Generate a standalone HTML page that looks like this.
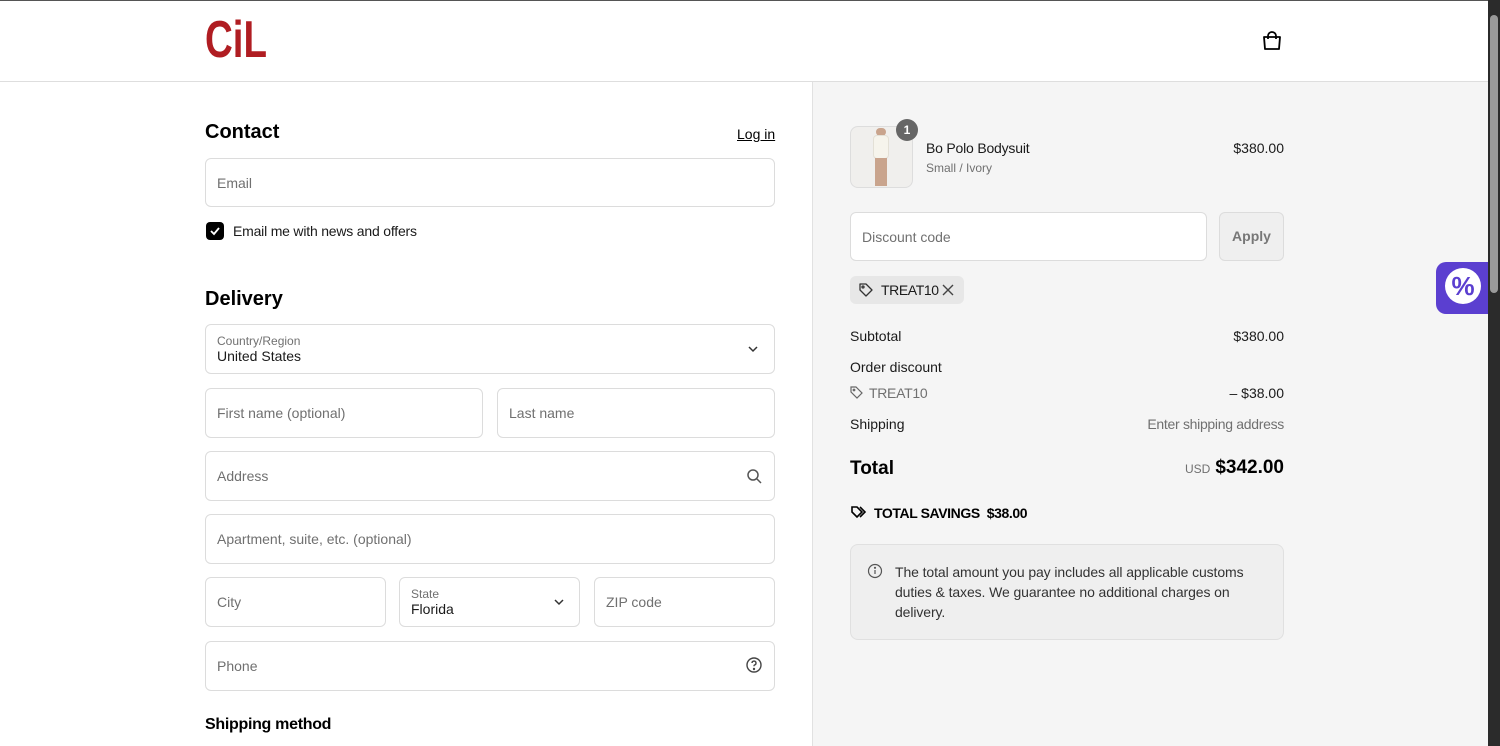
<!DOCTYPE html>
<html><head><meta charset="utf-8"><style>
*{box-sizing:border-box;margin:0;padding:0}
body{width:1500px;height:746px;overflow:hidden;position:relative;font-family:"Liberation Sans",sans-serif;color:#000;background:#fff}
.a{position:absolute}
.inp{position:absolute;border:1px solid #dcdcdc;border-radius:6px;background:#fff;font-size:14px;color:#707070;padding-left:11px;display:flex;align-items:center}
h2{position:absolute;font-size:20px;font-weight:bold}
.r{font-size:14px;color:#1a1a1a}
.rt{position:absolute;right:216px;text-align:right;white-space:nowrap}
</style></head><body>
<div class="a" style="left:0;top:0;width:1488px;height:1px;background:#555"></div>
<div class="a" style="left:205px;top:12px;font-size:52px;font-weight:bold;color:#b01d22;line-height:56px;transform:scaleX(0.74);transform-origin:left top">CiL</div>
<svg class="a" style="left:1261px;top:30px" width="22" height="22" viewBox="0 0 22 22" fill="none" stroke="#000" stroke-width="1.8"><path d="M3 7h16l-1 12H4z" stroke-linejoin="round"/><path d="M7 9V6a4 4 0 0 1 8 0v3"/></svg>
<div class="a" style="left:0;top:81px;width:1488px;height:1px;background:#dedede"></div>
<div class="a" style="left:812px;top:82px;width:676px;height:664px;background:#f5f5f5;border-left:1px solid #e1e1e1"></div>

<h2 style="left:205px;top:121px">Contact</h2>
<div class="a" style="left:737px;top:126px;font-size:14px;text-decoration:underline">Log in</div>
<div class="inp" style="left:205px;top:158px;width:570px;height:49px">Email</div>
<div class="a" style="left:206px;top:222px;width:18px;height:18px;background:#000;border-radius:4px"></div>
<svg class="a" style="left:206px;top:222px" width="18" height="18"><path d="M5 9l3 3 5-6" stroke="#fff" stroke-width="1.8" fill="none"/></svg>
<div class="a r" style="left:233px;top:223px;letter-spacing:-0.2px">Email me with news and offers</div>

<h2 style="left:205px;top:288px">Delivery</h2>
<div class="inp" style="left:205px;top:324px;width:570px;height:50px;display:block;padding-top:9px"><div style="font-size:12px;color:#707070">Country/Region</div><div style="color:#1a1a1a;font-size:14px">United States</div></div>
<svg class="a" style="left:747px;top:343px" width="12" height="12"><path d="M2 4l4 4 4-4" stroke="#333" stroke-width="1.5" fill="none"/></svg>
<div class="inp" style="left:205px;top:388px;width:278px;height:50px">First name (optional)</div>
<div class="inp" style="left:497px;top:388px;width:278px;height:50px">Last name</div>
<div class="inp" style="left:205px;top:451px;width:570px;height:50px">Address</div>
<svg class="a" style="left:745px;top:467px" width="18" height="18" fill="none" stroke="#555" stroke-width="1.5"><circle cx="8" cy="8" r="5"/><path d="M12 12l4 4"/></svg>
<div class="inp" style="left:205px;top:514px;width:570px;height:50px">Apartment, suite, etc. (optional)</div>
<div class="inp" style="left:205px;top:577px;width:181px;height:50px">City</div>
<div class="inp" style="left:399px;top:577px;width:181px;height:50px;display:block;padding-top:9px"><div style="font-size:12px">State</div><div style="color:#1a1a1a">Florida</div></div>
<svg class="a" style="left:553px;top:596px" width="12" height="12"><path d="M2 4l4 4 4-4" stroke="#333" stroke-width="1.5" fill="none"/></svg>
<div class="inp" style="left:594px;top:577px;width:181px;height:50px">ZIP code</div>
<div class="inp" style="left:205px;top:641px;width:570px;height:50px">Phone</div>
<svg class="a" style="left:745px;top:656px" width="18" height="18" fill="none" stroke="#444" stroke-width="1.4"><circle cx="9" cy="9" r="7"/><path d="M7 7a2 2 0 1 1 2.5 2c-.5.2-.5.7-.5 1.3"/><circle cx="9" cy="13" r=".5" fill="#444"/></svg>
<div class="a" style="left:205px;top:716px;font-size:16px;font-weight:bold;letter-spacing:-0.3px">Shipping method</div>

<div class="a" style="left:850px;top:126px;width:63px;height:62px;border:1px solid #ddd;border-radius:8px;background:#f0efed"></div>
<div class="a" style="left:876px;top:128px;width:10px;height:8px;background:#c9a48d;border-radius:4px"></div>
<div class="a" style="left:873px;top:135px;width:16px;height:24px;background:#f6f4ec;border:1px solid #e3e0d6;border-radius:4px"></div>
<div class="a" style="left:875px;top:158px;width:12px;height:28px;background:#c9a48d"></div>
<div class="a" style="left:896px;top:119px;width:22px;height:22px;border-radius:50%;background:#666;color:#fff;font-size:12px;font-weight:bold;text-align:center;line-height:22px">1</div>
<div class="a r" style="left:926px;top:140px;letter-spacing:-0.2px">Bo Polo Bodysuit</div>
<div class="a" style="left:926px;top:161px;font-size:12px;color:#707070">Small / Ivory</div>
<div class="rt r" style="top:140px">$380.00</div>
<div class="inp" style="left:850px;top:212px;width:357px;height:49px">Discount code</div>
<div class="a" style="left:1219px;top:212px;width:65px;height:49px;border:1px solid #dcdcdc;border-radius:6px;background:#efefef;color:#777;font-size:14px;font-weight:bold;text-align:center;line-height:47px">Apply</div>
<div class="a" style="left:850px;top:276px;width:114px;height:28px;background:#e7e7e7;border-radius:6px"></div>
<svg class="a" style="left:858px;top:282px" width="16" height="16" fill="none" stroke="#333" stroke-width="1.3"><path d="M2 8V2h6l6 6-6 6z" stroke-linejoin="round"/><circle cx="5" cy="5" r="1"/></svg>
<div class="a r" style="left:881px;top:282px;letter-spacing:-0.4px">TREAT10</div>
<svg class="a" style="left:942px;top:284px" width="12" height="12" stroke="#444" stroke-width="1.4"><path d="M1 1l10 10M11 1L1 11"/></svg>

<div class="a r" style="left:850px;top:328px">Subtotal</div>
<div class="rt r" style="top:328px">$380.00</div>
<div class="a r" style="left:850px;top:359px">Order discount</div>
<svg class="a" style="left:850px;top:386px" width="13" height="13" fill="none" stroke="#666" stroke-width="1.2"><path d="M1 6V1h5l6 6-5 5z"/><circle cx="4" cy="4" r=".8"/></svg>
<div class="a" style="left:869px;top:385px;font-size:14px;color:#707070;letter-spacing:-0.3px">TREAT10</div>
<div class="rt r" style="top:385px">– $38.00</div>
<div class="a r" style="left:850px;top:416px">Shipping</div>
<div class="rt" style="top:416px;font-size:14px;color:#707070;letter-spacing:-0.3px">Enter shipping address</div>
<div class="a" style="left:850px;top:458px;font-size:19px;font-weight:bold">Total</div>
<div class="rt" style="top:457px;font-size:19px;font-weight:bold"><span style="font-size:12px;color:#707070;font-weight:normal;margin-right:5px">USD</span>$342.00</div>
<svg class="a" style="left:850px;top:504px" width="18" height="16" fill="none" stroke="#000" stroke-width="1.6"><path d="M2 8V3h5l5 5-5 5z"/><path d="M10 3l5 5-5 5"/></svg>
<div class="a" style="left:874px;top:505px;font-size:14px;font-weight:bold;letter-spacing:-0.4px">TOTAL SAVINGS&nbsp; $38.00</div>
<div class="a" style="left:850px;top:544px;width:434px;height:96px;border:1px solid #e0e0e0;border-radius:8px;background:#efefef"></div>
<svg class="a" style="left:867px;top:563px" width="16" height="16" fill="none" stroke="#555" stroke-width="1.2"><circle cx="8" cy="8" r="6.5"/><path d="M8 7v4"/><circle cx="8" cy="4.8" r=".5" fill="#555"/></svg>
<div class="a" style="left:895px;top:562px;width:360px;font-size:14px;line-height:20px;color:#333;letter-spacing:-0.1px">The total amount you pay includes all applicable customs duties &amp; taxes. We guarantee no additional charges on delivery.</div>

<div class="a" style="left:1436px;top:262px;width:56px;height:52px;background:#5b3fd0;border-radius:10px 0 0 10px"></div>
<div class="a" style="left:1445px;top:268px;width:36px;height:36px;border-radius:50%;background:#fff;color:#5b3fd0;font-size:26px;font-weight:bold;text-align:center;line-height:36px">%</div>
<div class="a" style="left:1488px;top:0;width:12px;height:746px;background:#2b2b2b"></div>
<div class="a" style="left:1490px;top:15px;width:8px;height:278px;background:#9a9a9a;border-radius:4px"></div>
</body></html>
